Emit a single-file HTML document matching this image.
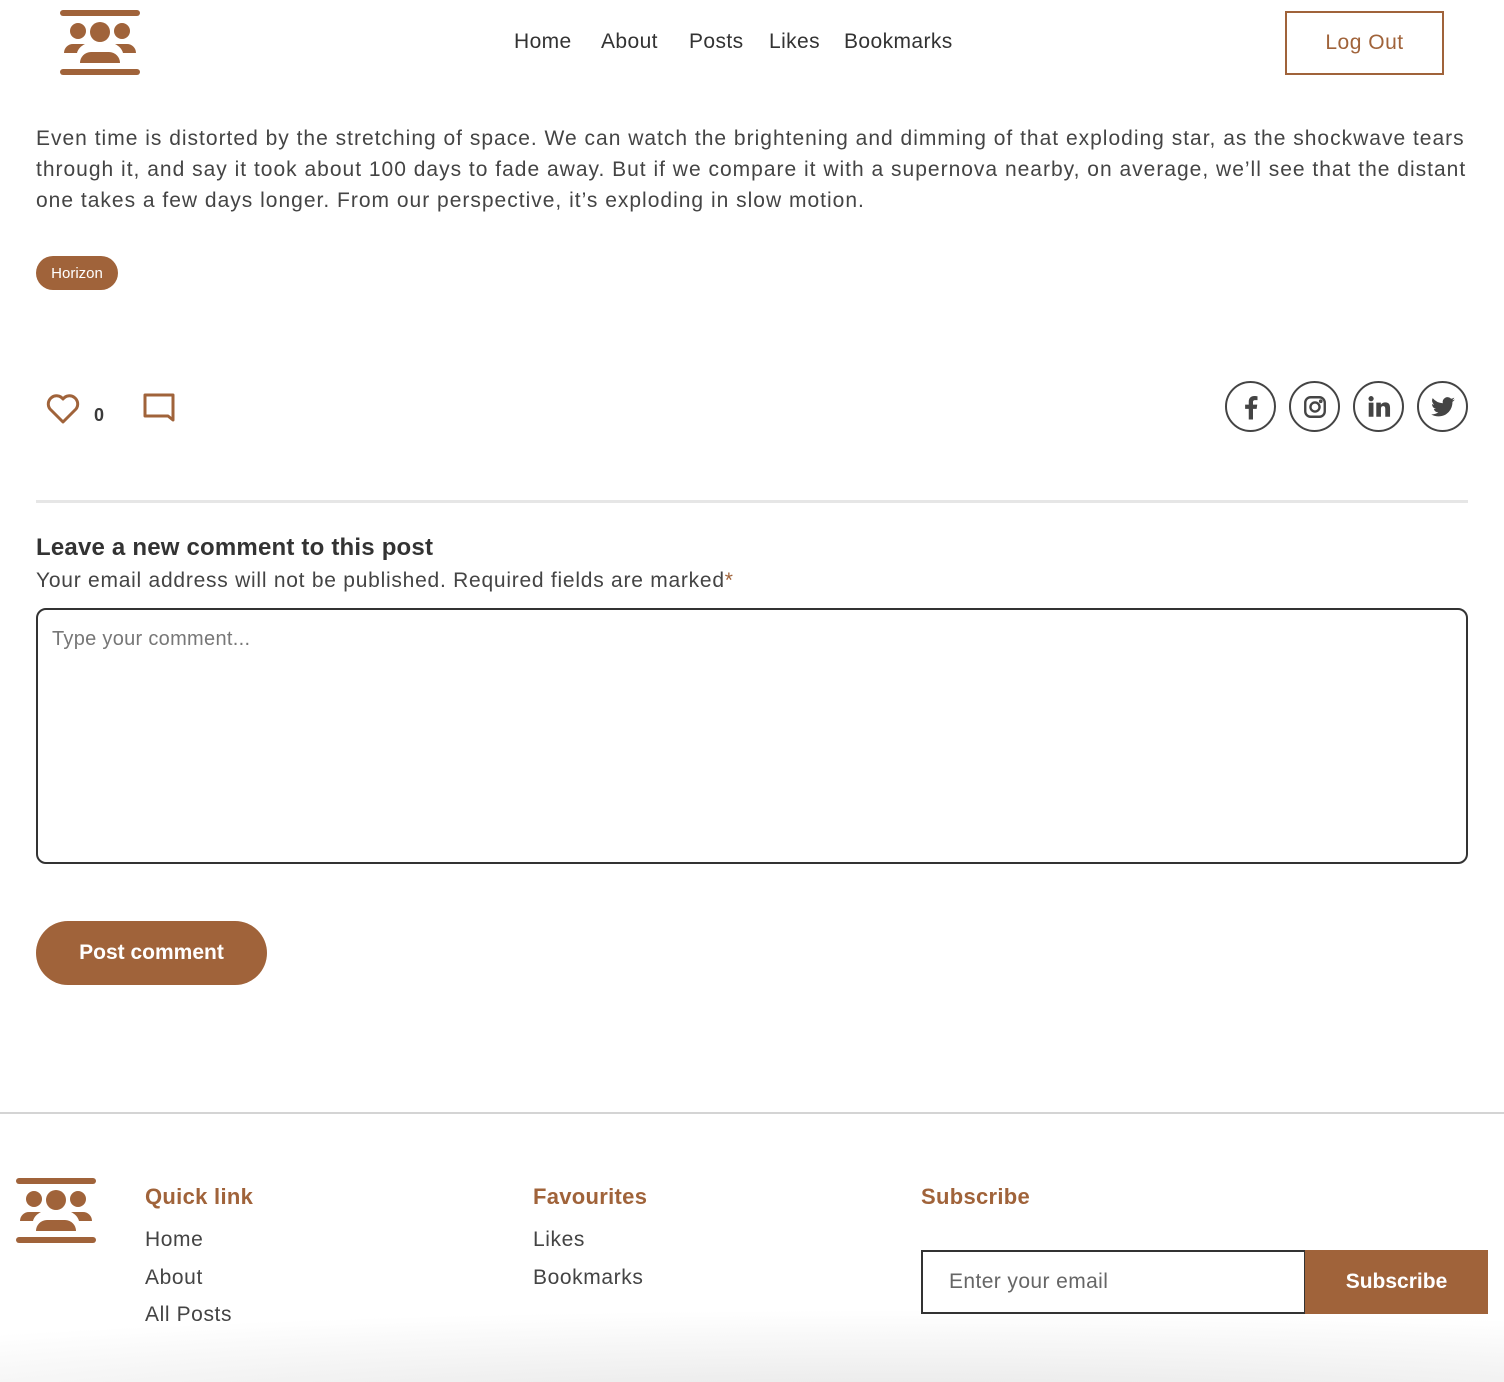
<!DOCTYPE html>
<html><head><meta charset="utf-8"><style>
*{box-sizing:border-box;margin:0;padding:0}
body{width:1504px;height:1382px;overflow:hidden;background:#fff;font-family:"Liberation Sans",sans-serif;color:#3a3a3a;position:relative}
.b{color:#a0633a}
.abs{position:absolute}
.nav a{position:absolute;top:30px;font-size:21px;letter-spacing:.4px;color:#333;text-decoration:none}
.logout{left:1285px;top:11px;width:159px;height:64px;border:2px solid #a0633a;color:#a0633a;font-size:21px;letter-spacing:.5px;display:flex;align-items:center;justify-content:center}
.para{left:36px;top:123px;font-size:21px;line-height:31px;color:#444;white-space:nowrap;letter-spacing:1px}
.tag{left:36px;top:256px;width:82px;height:34px;border-radius:17px;background:#a0633a;color:#fff;font-size:15px;display:flex;align-items:center;justify-content:center}
.soc{top:381px;width:51px;height:51px;border:2px solid #444;border-radius:50%;display:flex;align-items:center;justify-content:center}
.hr{left:36px;top:500px;width:1432px;height:3px;background:#e6e6e6}
.ta{left:36px;top:608px;width:1432px;height:256px;border:2px solid #333;border-radius:10px;padding:18px 14px;font-size:20px;letter-spacing:.3px;color:#777}
.btn{left:36px;top:921px;width:231px;height:64px;border-radius:32px;background:#a0633a;color:#fff;font-size:21px;font-weight:bold;display:flex;align-items:center;justify-content:center}
.foot{left:0;top:1112px;width:1504px;height:2px;background:#d4d4d4}
.fh{font-size:22px;font-weight:bold;color:#a0633a;top:1184px;letter-spacing:.3px}
.fl{font-size:21px;letter-spacing:.6px;color:#444}
.shade{left:0;top:1290px;width:1504px;height:92px;background:radial-gradient(ellipse 1500px 120px at 900px 140px,#e0e0e0,rgba(255,255,255,0) 100%)}
</style></head><body>
<svg class="abs" style="left:60px;top:10px" width="80" height="66" viewBox="0 0 80 66" fill="#a0633a">
<rect x="0" y="0" width="80" height="6" rx="3"/>
<rect x="0" y="59" width="80" height="6" rx="3"/>
<circle cx="18" cy="21" r="8"/><circle cx="40" cy="22" r="10"/><circle cx="62" cy="21" r="8"/>
<path d="M4 43a9 9 0 0 1 9-9h12c-4 2-7 5-8 9H4z"/>
<path d="M76 43a9 9 0 0 0-9-9H55c4 2 7 5 8 9h13z"/>
<path d="M20 53a11 11 0 0 1 11-11h18a11 11 0 0 1 11 11H20z"/>
</svg>
<div class="nav"><a style="left:514px">Home</a><a style="left:601px">About</a><a style="left:689px">Posts</a><a style="left:769px">Likes</a><a style="left:844px">Bookmarks</a></div>
<div class="abs logout">Log Out</div>
<div class="abs para">Even time is distorted by the stretching of space. We can watch the brightening and dimming of that exploding star, as the shockwave tears<br>through it, and say it took about 100 days to fade away. But if we compare it with a supernova nearby, on average, we’ll see that the distant<br>one takes a few days longer. From our perspective, it’s exploding in slow motion.</div>
<div class="abs tag">Horizon</div>
<svg class="abs" style="left:45px;top:392px" width="36" height="34" viewBox="0 0 36 34" fill="none" stroke="#a0633a" stroke-width="3" stroke-linejoin="round"><path d="M18 30 L5 17 A7.5 7.5 0 0 1 18 7 A7.5 7.5 0 0 1 31 17 Z"/></svg>
<div class="abs" style="left:94px;top:405px;font-size:18px;font-weight:bold">0</div>
<svg class="abs" style="left:141px;top:391px" width="36" height="36" viewBox="0 0 36 36" fill="none" stroke="#a0633a" stroke-width="3" stroke-linejoin="round"><path d="M4 4H32V29L27 25H4Z"/></svg>
<div class="abs soc" style="left:1225px"><svg width="30" height="30" viewBox="0 0 24 24" fill="#444"><path d="M13.6 22v-8.5h2.9l.5-3.4h-3.4V8.2c0-1 .3-1.7 1.8-1.7h1.8V3.4c-.3 0-1.4-.2-2.6-.2-2.6 0-4.4 1.6-4.4 4.5v2.4H7.3v3.4h2.9V22z"/></svg></div>
<div class="abs soc" style="left:1289px"><svg width="26" height="26" viewBox="0 0 24 24" fill="none" stroke="#444" stroke-width="2.2"><rect x="3" y="3" width="18" height="18" rx="5"/><circle cx="12" cy="12" r="4.2"/><circle cx="17.3" cy="6.7" r=".6" fill="#444"/></svg></div>
<div class="abs soc" style="left:1353px"><svg width="26" height="26" viewBox="0 0 24 24" fill="#444"><rect x="2.5" y="8" width="4.4" height="13"/><circle cx="4.7" cy="4.3" r="2.4"/><path d="M9.5 8h4.2v1.9c.7-1.3 2.3-2.2 4.2-2.2 3.5 0 4.3 2.3 4.3 5.2V21h-4.4v-7c0-1.6-.3-2.8-2-2.8s-2 1.3-2 2.8v7H9.5z"/></svg></div>
<div class="abs soc" style="left:1417px"><svg width="28" height="26" viewBox="0 0 24 24" fill="#444"><path d="M23 5.1c-.8.4-1.7.6-2.6.7.9-.6 1.6-1.4 2-2.5-.9.5-1.9.9-2.9 1.1A4.5 4.5 0 0 0 11.8 8.5 12.8 12.8 0 0 1 2.5 3.8a4.5 4.5 0 0 0 1.4 6 4.5 4.5 0 0 1-2-.6v.1c0 2.2 1.6 4 3.6 4.4a4.5 4.5 0 0 1-2 .1 4.5 4.5 0 0 0 4.2 3.1A9 9 0 0 1 1 18.7 12.8 12.8 0 0 0 7.9 20.7c8.3 0 12.8-6.9 12.8-12.8v-.6c.9-.6 1.6-1.4 2.3-2.2z"/></svg></div>
<div class="abs hr"></div>
<div class="abs" style="left:36px;top:534px;font-size:24px;font-weight:bold;color:#333;letter-spacing:.2px">Leave a new comment to this post</div>
<div class="abs" style="left:36px;top:569px;font-size:21px;letter-spacing:.75px;color:#444">Your email address will not be published. Required fields are marked<span class="b">*</span></div>
<div class="abs ta">Type your comment...</div>
<div class="abs btn">Post comment</div>
<div class="abs foot"></div>
<svg class="abs" style="left:16px;top:1178px" width="80" height="66" viewBox="0 0 80 66" fill="#a0633a">
<rect x="0" y="0" width="80" height="6" rx="3"/>
<rect x="0" y="59" width="80" height="6" rx="3"/>
<circle cx="18" cy="21" r="8"/><circle cx="40" cy="22" r="10"/><circle cx="62" cy="21" r="8"/>
<path d="M4 43a9 9 0 0 1 9-9h12c-4 2-7 5-8 9H4z"/>
<path d="M76 43a9 9 0 0 0-9-9H55c4 2 7 5 8 9h13z"/>
<path d="M20 53a11 11 0 0 1 11-11h18a11 11 0 0 1 11 11H20z"/>
</svg>
<div class="abs fh" style="left:145px">Quick link</div>
<div class="abs fh" style="left:533px">Favourites</div>
<div class="abs fh" style="left:921px">Subscribe</div>
<div class="abs fl" style="left:145px;top:1228px">Home</div>
<div class="abs fl" style="left:145px;top:1266px">About</div>
<div class="abs fl" style="left:145px;top:1303px">All Posts</div>
<div class="abs fl" style="left:533px;top:1228px">Likes</div>
<div class="abs fl" style="left:533px;top:1266px">Bookmarks</div>
<div class="abs shade"></div>
<div class="abs" style="left:921px;top:1250px;width:385px;height:64px;border:2px solid #333;background:#fff;padding:18px 26px;font-size:21px;letter-spacing:.4px;color:#666">Enter your email</div>
<div class="abs" style="left:1305px;top:1250px;width:183px;height:64px;background:#a0633a;color:#fff;font-size:21px;font-weight:bold;display:flex;align-items:center;justify-content:center">Subscribe</div>
</body></html>
